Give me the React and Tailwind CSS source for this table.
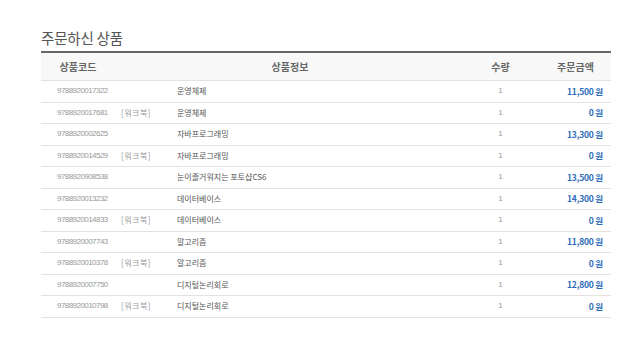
import React from "react";

const rows = [
  ["9788920017322", "", "운영체제", "11,500"],
  ["9788920017681", "[워크북]", "운영체제", "0"],
  ["9788920002625", "", "자바프로그래밍", "13,300"],
  ["9788920014529", "[워크북]", "자바프로그래밍", "0"],
  ["9788920908538", "", "눈이즐거워지는 포토샵CS6", "13,500"],
  ["9788920013232", "", "데이터베이스", "14,300"],
  ["9788920014833", "[워크북]", "데이터베이스", "0"],
  ["9788920007743", "", "알고리즘", "11,800"],
  ["9788920010378", "[워크북]", "알고리즘", "0"],
  ["9788920007750", "", "디지털논리회로", "12,800"],
  ["9788920010798", "[워크북]", "디지털논리회로", "0"],
];

const kr = { fontFamily: '"Noto Sans CJK KR", "Noto Sans", sans-serif' };

export default function App() {
  return (
    <div className="w-[631px] h-[359px] bg-white pt-[28px] pl-[41px]" style={kr}>
      <h2 className="text-[14.5px] leading-[20px] text-[#555] font-normal mb-[3px] tracking-[-0.2px]">
        주문하신 상품
      </h2>
      <div className="w-[570px] border-t-2 border-[#666]">
        <div className="grid grid-cols-[74px_350px_75px_71px] h-[28px] items-center bg-[#f8f8f8] border-b border-[#e2e2e2] text-[10px] font-semibold text-[#666]">
          <div className="text-center">상품코드</div>
          <div className="text-center">상품정보</div>
          <div className="text-center pr-[4px]">수량</div>
          <div className="text-center">주문금액</div>
        </div>
        {rows.map((r, i) => (
          <div
            key={i}
            className="grid grid-cols-[74px_55px_295px_75px_71px] h-[21.5px] items-center border-b border-[#e2e2e2]"
          >
            <div
              className="pl-[16px] text-[8px] text-[#999] tracking-[-0.55px]"
              style={{ fontFamily: '"Liberation Sans", Arial, sans-serif' }}
            >
              {r[0]}
            </div>
            <div className="pl-[6px] text-[8px] text-[#999] tracking-[0.5px]">{r[1]}</div>
            <div className="pl-[7px] text-[8px] text-[#555]">{r[2]}</div>
            <div
              className="text-center pr-[4px] text-[8px] text-[#999]"
              style={{ fontFamily: '"Liberation Sans", Arial, sans-serif' }}
            >
              1
            </div>
            <div className="text-right pr-[8px] text-[8.5px] font-bold text-[#2b6cb8] tracking-[-0.2px]">
              {r[3]} 원
            </div>
          </div>
        ))}
      </div>
    </div>
  );
}
